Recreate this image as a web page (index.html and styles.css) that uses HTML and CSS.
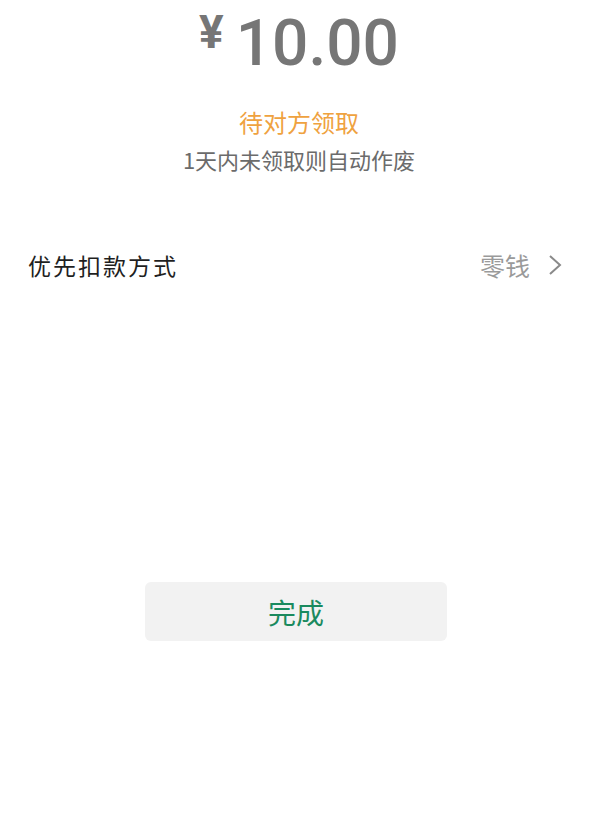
FILE: index.html
```html
<!DOCTYPE html>
<html lang="zh">
<head>
    <meta charset="UTF-8">
    <meta name="viewport" content="width=device-width, initial-scale=1.0">
    <title>转账详情</title>
    <link rel="stylesheet" href="styles.css">
</head>
<body>
    <div class="summary">
        <div class="amount"><span class="currency">¥</span>10.00</div>
        <div class="status">待对方领取</div>
        <div class="note">1天内未领取则自动作废</div>
    </div>

    <div class="pay-row">
        <div class="pay-label">优先扣款方式</div>
        <div class="pay-value">
            零钱
            <svg class="chevron" width="14" height="22" viewBox="0 0 14 22">
                <path d="M2 2 L12 11 L2 20" fill="none" stroke="#8a8a8a" stroke-width="2"/>
            </svg>
        </div>
    </div>

    <div class="actions">
        <button class="done-btn">完成</button>
    </div>
</body>
</html>
```

FILE: styles.css
```css
body {
    margin: 0;
    padding: 0;
    background-color: #FFFFFF;
    font-family: "Noto Sans CJK SC", "Noto Sans", sans-serif;
}
.summary {
    text-align: center;
}
.amount {
    font-family: Roboto, "Noto Sans", sans-serif;
    font-size: 64px;
    font-weight: 500;
    line-height: 64px;
    color: #767676;
}
.currency {
    font-size: 46px;
    font-weight: bold;
    margin-right: 12px;
    vertical-align: 17px;
}
.status {
    margin-top: 31px;
    font-size: 24px;
    line-height: 30px;
    color: #efa23f;
}
.note {
    margin-top: 8px;
    font-size: 22px;
    line-height: 28px;
    color: #6b6b6b;
}
.pay-row {
    display: flex;
    justify-content: space-between;
    align-items: center;
    margin-top: 74px;
    padding: 0 36px 0 28px;
}
.pay-label {
    font-size: 23px;
    letter-spacing: 2px;
    color: #1f1f1f;
}
.pay-value {
    display: flex;
    align-items: center;
    gap: 18px;
    font-size: 25px;
    color: #9a9a9a;
}
.actions {
    display: flex;
    justify-content: center;
    margin-top: 299px;
    padding-right: 6px;
}
.done-btn {
    width: 302px;
    height: 59px;
    border: none;
    border-radius: 6px;
    background-color: #f2f2f2;
    font-family: "Noto Sans CJK SC", sans-serif;
    font-size: 28px;
    color: #1a8a5e;
    cursor: pointer;
}
```
